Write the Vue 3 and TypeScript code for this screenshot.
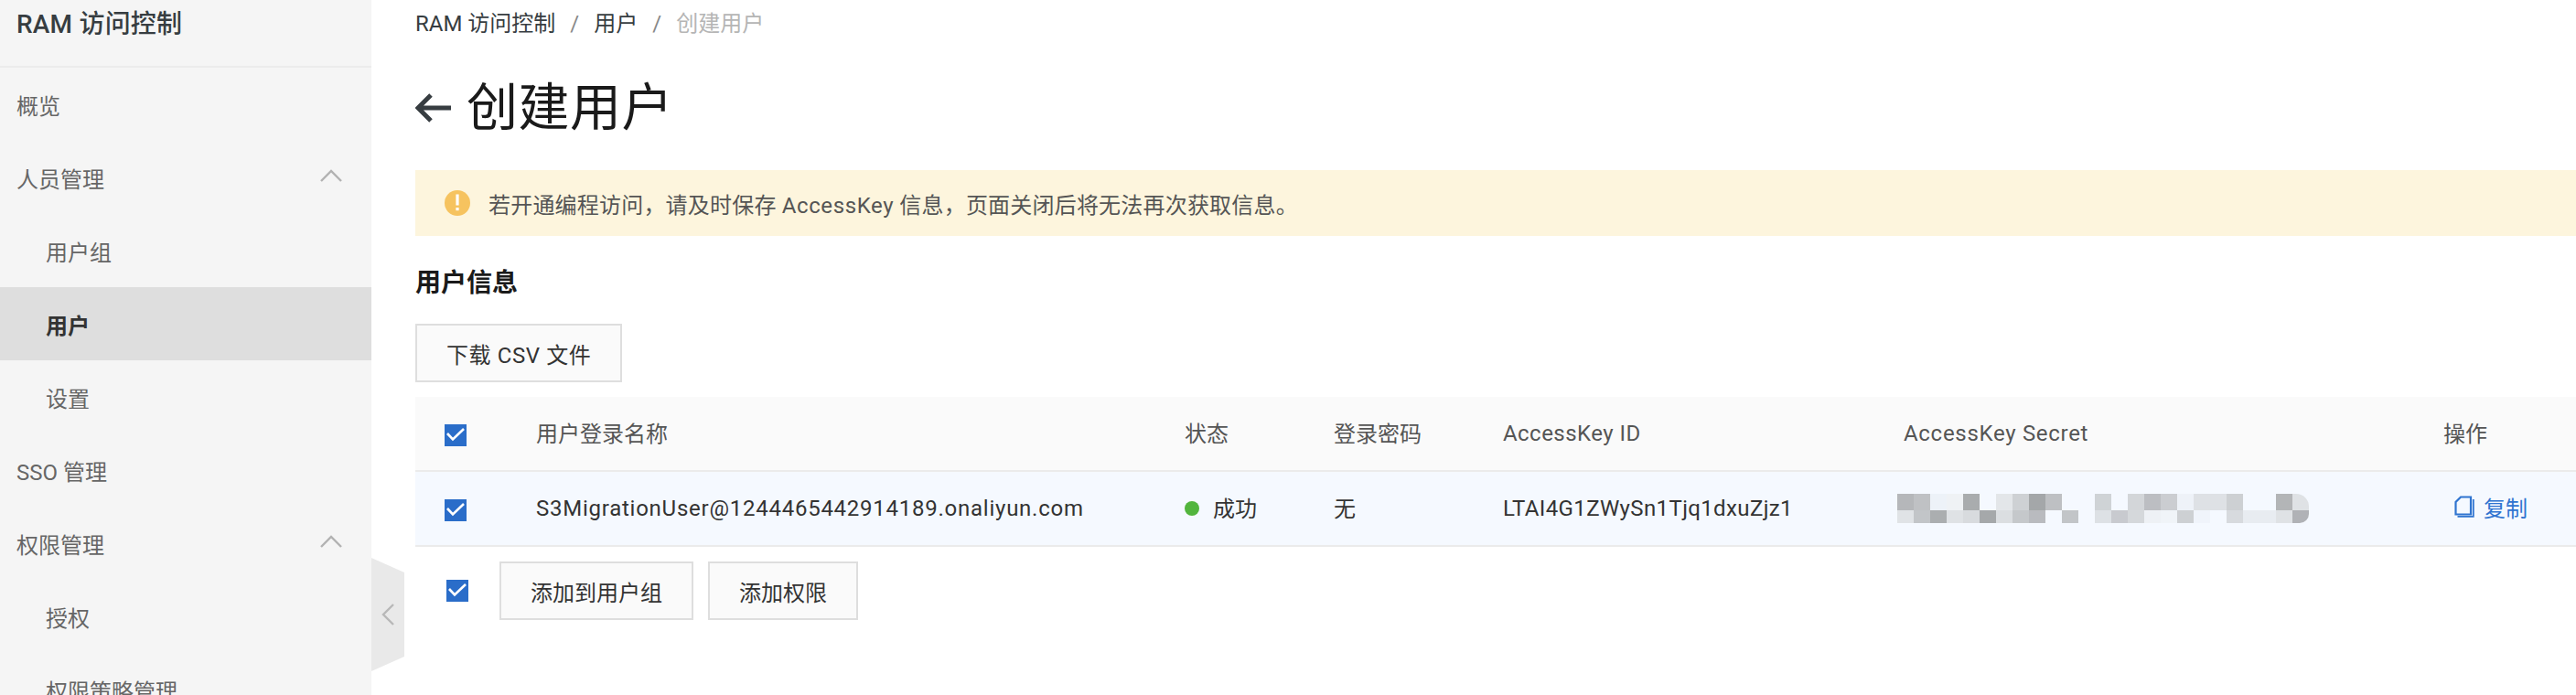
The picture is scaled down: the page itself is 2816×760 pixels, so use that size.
<script setup lang="ts">
interface MenuItem {
  label: string
  sub?: boolean
  active?: boolean
  open?: boolean
}

const menu: MenuItem[] = [
  { label: '概览' },
  { label: '人员管理', open: true },
  { label: '用户组', sub: true },
  { label: '用户', sub: true, active: true },
  { label: '设置', sub: true },
  { label: 'SSO 管理' },
  { label: '权限管理', open: true },
  { label: '授权', sub: true },
  { label: '权限策略管理', sub: true },
]

// 打码区域的色块，空字符串表示透明
const mosaicTop = ['b5b7ba', 'bfc1c4', 'edf2f8', 'eff2f5', 'a9acae', '', 'e3e6e9', 'ced1d4', 'a4a7a9', 'bec0c3', '', '', 'cfd3d6', '', 'd3d6d9', 'bcbec2', 'cbcdd1', 'eef2f8', 'dee1e5', 'dee1e5', 'cdd0d3', '', '', 'b3b5b7', 'dfe2e5']
const mosaicBottom = ['e0e3e6', 'c2c5c8', 'abaeb0', 'dfe2e5', 'd8dbde', 'a5a8aa', 'dbdee1', 'c5c8cb', 'b9bbbf', '', 'c2c5c8', '', 'dde1e5', 'c8cacf', 'd5d8db', 'eef1f5', 'f0f4f8', 'cdd0d3', 'f0f4fb', '', 'd7dade', 'e8ecf1', 'e8ecf1', 'dfe2e5', 'b0b2b6']

const cellColor = (c: string) => (c ? '#' + c : 'transparent')
</script>

<template>
  <div class="page">
    <aside class="sidebar">
      <div class="side-title">RAM 访问控制</div>
      <nav class="menu">
        <div
          v-for="item in menu"
          :key="item.label"
          class="menu-item"
          :class="{ sub: item.sub, active: item.active }"
        >
          <span>{{ item.label }}</span>
          <svg v-if="item.open" class="caret" width="24" height="14" viewBox="0 0 24 14">
            <path d="M1 13 L12 2 L23 13" fill="none" stroke="#b2b2b2" stroke-width="2.4" />
          </svg>
        </div>
      </nav>
      <div class="collapse-tab">
        <svg width="14" height="24" viewBox="0 0 14 24">
          <path d="M13 1 L2 12 L13 23" fill="none" stroke="#b8b8b8" stroke-width="2.4" />
        </svg>
      </div>
    </aside>

    <main class="content">
      <div class="breadcrumb">
        <span>RAM 访问控制</span>
        <i>/</i>
        <span>用户</span>
        <i>/</i>
        <span class="current">创建用户</span>
      </div>

      <div class="page-head">
        <svg width="40" height="32" viewBox="0 0 40 32">
          <path d="M39 16 H3 M17 2 L3 16 L17 30" fill="none" stroke="#373d41" stroke-width="5" />
        </svg>
        <h1>创建用户</h1>
      </div>

      <div class="alert">
        <svg width="28" height="28" viewBox="0 0 28 28">
          <circle cx="14" cy="14" r="14" fill="#f6c35f" />
          <rect x="12.4" y="4.5" width="3.2" height="12" fill="#fff" />
          <rect x="12.4" y="19" width="3.2" height="3.2" fill="#fff" />
        </svg>
        <span>若开通编程访问，请及时保存 <span class="latin">AccessKey</span> 信息，页面关闭后将无法再次获取信息。</span>
      </div>

      <h2>用户信息</h2>
      <button class="btn csv">下载 CSV 文件</button>

      <div class="table">
        <div class="tr head">
          <div class="cell check">
            <span class="checkbox">
              <svg width="24" height="24" viewBox="0 0 24 24"><path d="M3 10 L9 16.5 L21 5" fill="none" stroke="#fff" stroke-width="2.6" /></svg>
            </span>
          </div>
          <div class="cell name cjk">用户登录名称</div>
          <div class="cell status cjk">状态</div>
          <div class="cell pwd cjk">登录密码</div>
          <div class="cell akid">AccessKey ID</div>
          <div class="cell secret">AccessKey Secret</div>
          <div class="cell ops cjk">操作</div>
        </div>
        <div class="tr body">
          <div class="cell check">
            <span class="checkbox">
              <svg width="24" height="24" viewBox="0 0 24 24"><path d="M3 10 L9 16.5 L21 5" fill="none" stroke="#fff" stroke-width="2.6" /></svg>
            </span>
          </div>
          <div class="cell name user">S3MigrationUser@1244465442914189.onaliyun.com</div>
          <div class="cell status cjk"><span class="dot"></span>成功</div>
          <div class="cell pwd cjk">无</div>
          <div class="cell akid key">LTAI4G1ZWySn1Tjq1dxuZjz1</div>
          <div class="cell secret">
            <div class="mosaic">
              <div class="mosaic-row top">
                <span v-for="(c, i) in mosaicTop" :key="i" :style="{ background: cellColor(c) }"></span>
              </div>
              <div class="mosaic-row bottom">
                <span v-for="(c, i) in mosaicBottom" :key="i" :style="{ background: cellColor(c) }"></span>
              </div>
            </div>
          </div>
          <div class="cell ops link cjk">
            <svg width="22" height="24" viewBox="0 0 22 24">
              <path d="M7 1.5 H18 V20.5 H1.5 V7 Z" fill="none" stroke="#2f74d0" stroke-width="2.2" />
              <path d="M3.5 22.8 H20.8 V4" fill="none" stroke="#2f74d0" stroke-width="1.8" />
            </svg>
            <span>复制</span>
          </div>
        </div>
      </div>

      <div class="footer-actions">
        <span class="checkbox">
          <svg width="24" height="24" viewBox="0 0 24 24"><path d="M3 10 L9 16.5 L21 5" fill="none" stroke="#fff" stroke-width="2.6" /></svg>
        </span>
        <button class="btn">添加到用户组</button>
        <button class="btn">添加权限</button>
      </div>
    </main>
  </div>
</template>

<style>
html,
body {
  margin: 0;
  background: #fff;
  overflow: hidden;
}
</style>

<style scoped>
.page {
  display: flex;
  width: 2816px;
  height: 760px;
  overflow: hidden;
  font-family: Roboto, "Noto Sans CJK SC", sans-serif;
  font-size: 24px;
  color: #333;
}

.sidebar {
  position: relative;
  flex: 0 0 406px;
  background: #f5f5f5;
}

.side-title {
  height: 63px;
  padding: 9px 0 0 18px;
  border-bottom: 2px solid #ececec;
  font-size: 28px;
  line-height: 36px;
  font-weight: 500;
  color: #373d41;
  letter-spacing: 0.2px;
}

.menu-item {
  display: flex;
  align-items: center;
  justify-content: space-between;
  height: 80px;
  padding: 0 32px 0 18px;
  color: #666;
}

.menu-item.sub {
  padding-left: 50px;
}

.menu-item.active {
  background: #dedede;
  color: #333;
  font-weight: 700;
}

.caret {
  margin-top: -4px;
}

.collapse-tab {
  position: absolute;
  left: 100%;
  top: 610px;
  display: flex;
  align-items: center;
  justify-content: center;
  width: 36px;
  height: 124px;
  background: #e9e9e9;
  clip-path: polygon(0 0, 100% 16px, 100% 108px, 0 100%);
}

.content {
  flex: 1;
  min-width: 0;
  padding: 0 0 0 48px;
}

.breadcrumb {
  display: flex;
  align-items: center;
  height: 52px;
  line-height: 52px;
  color: #373d41;
}

.breadcrumb i {
  margin: 0 16px;
  font-style: normal;
  color: #888;
}

.breadcrumb .current {
  color: #b5b5b5;
}

.page-head {
  display: flex;
  align-items: center;
  gap: 16px;
  height: 80px;
  margin-top: 26px;
}

.page-head h1 {
  margin: 0;
  font-size: 56px;
  line-height: 80px;
  font-weight: 400;
  letter-spacing: 0.5px;
  color: #1a1a1a;
}

.alert {
  display: flex;
  align-items: center;
  gap: 20px;
  height: 72px;
  margin-top: 28px;
  padding-left: 32px;
  background: #fdf5dd;
  color: #555;
  letter-spacing: 0.2px;
}

.latin {
  letter-spacing: 0.6px;
}

h2 {
  margin: 32px 0 0;
  font-size: 28px;
  line-height: 40px;
  font-weight: 700;
  color: #1a1a1a;
}

.btn {
  height: 64px;
  padding: 0 32px;
  box-sizing: border-box;
  border: 2px solid #dedede;
  border-radius: 0;
  background: #fafafa;
  font: inherit;
  color: #333;
}

.btn.csv {
  letter-spacing: 0.6px;
}

.content > .btn {
  display: block;
  margin-top: 24px;
}

.table {
  margin-top: 16px;
}

.tr {
  display: flex;
  align-items: center;
  box-sizing: border-box;
  height: 82px;
  border-bottom: 2px solid #ebebeb;
}

.tr.head {
  background: #fafafa;
  color: #555;
}

.tr.body {
  background: #f5f9ff;
}

.cell {
  box-sizing: border-box;
  flex: none;
}

.cjk {
  padding-bottom: 4px;
}

.check {
  display: flex;
  width: 132px;
  padding: 4px 0 0 32px;
}

.name {
  width: 709px;
}

.user {
  letter-spacing: 0.75px;
}

.status {
  display: flex;
  align-items: center;
  width: 163px;
}

.pwd {
  width: 185px;
}

.akid {
  width: 438px;
  letter-spacing: 0.45px;
}

.key {
  letter-spacing: 0.37px;
}

.secret {
  width: 590px;
  letter-spacing: 0.7px;
}

.link {
  display: flex;
  align-items: center;
  gap: 10px;
  margin-left: 12px;
  color: #2f74d0;
}

.checkbox {
  display: block;
  flex: none;
  width: 24px;
  height: 24px;
  background: #2a6dc9;
}

.checkbox svg {
  display: block;
}

.dot {
  width: 16px;
  height: 16px;
  margin: 4px 15px 0 0;
  border-radius: 50%;
  background: #52b53d;
}

.mosaic {
  margin-left: -7px;
}

.mosaic-row {
  display: flex;
}

.mosaic-row span {
  flex: none;
  width: 18px;
}

.mosaic-row.top span {
  height: 18px;
}

.mosaic-row.bottom span {
  height: 14px;
}

.mosaic-row.top span:last-child {
  border-top-right-radius: 14px;
}

.mosaic-row.bottom span:last-child {
  border-bottom-right-radius: 10px;
}

.footer-actions {
  display: flex;
  align-items: center;
  margin-top: 16px;
  padding-left: 34px;
}

.footer-actions .btn {
  margin-left: 16px;
}

.footer-actions .btn:first-of-type {
  margin-left: 34px;
}
</style>
